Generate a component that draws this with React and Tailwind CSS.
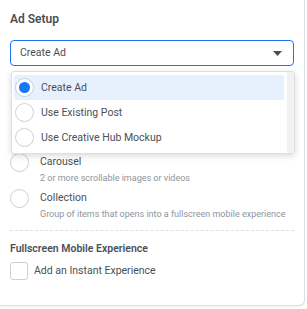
import React from "react";

function Radio({ checked }) {
  return (
    <span className="flex h-[19px] w-[19px] shrink-0 items-center justify-center rounded-full border border-[#ccd0d5] bg-white">
      {checked && <span className="h-[11px] w-[11px] rounded-full bg-[#1877f2]" />}
    </span>
  );
}

function Option({ title, sub }) {
  return (
    <div className="flex gap-[11px]">
      <span className="-mt-[1px]">
        <Radio />
      </span>
      <div className="flex flex-col">
        <span className="text-[10.5px] leading-[16px]">{title}</span>
        <span className="whitespace-nowrap text-[9px] leading-[16px] text-[#90949c]">{sub}</span>
      </div>
    </div>
  );
}

export default function App() {
  return (
    <div className="h-[309px] w-[307px] overflow-hidden bg-white font-['Roboto',sans-serif] text-[#4b4f56]">
      <div className="relative h-[306px] w-[305px] rounded-br-[6px] border-b border-r border-[#dddfe2] bg-white px-[10px] pt-[10px] shadow-[0_1px_2px_rgba(0,0,0,0.06)]">
        <div className="text-[12px] font-semibold leading-[18px]">Ad Setup</div>
        <div className="mt-[12px] flex h-[26px] w-[284px] items-center justify-between rounded-[4px] border border-[#1877f2] pl-[9px] pr-[11px] text-[10.5px]">
          <span>Create Ad</span>
          <svg width="9" height="5" viewBox="0 0 9 5"><path d="M0 0h9L4.5 5z" fill="#4b4f56" /></svg>
        </div>

        <div className="mt-[88px] flex flex-col gap-[4px]">
          <Option title="Carousel" sub="2 or more scrollable images or videos" />
          <Option title="Collection" sub="Group of items that opens into a fullscreen mobile experience" />
        </div>

        <div className="mt-[8px] border-t border-dashed border-[#dddfe2]" />

        <div className="mt-[10px] text-[10.5px] font-semibold leading-[16px]">Fullscreen Mobile Experience</div>
        <label className="mt-[5px] flex items-center gap-[6px]">
          <span className="h-[18px] w-[18px] rounded-[3px] border border-[#ccd0d5] bg-white" />
          <span className="text-[10.5px] leading-[16px]">Add an Instant Experience</span>
        </label>

        <div className="absolute left-[11px] top-[71px] flex w-[284px] rounded-[3px] border border-[#dddfe2] bg-white shadow-[0_2px_6px_rgba(0,0,0,0.15)]">
          <div className="flex flex-1 flex-col py-[3px] pl-[2px] pr-[3px]">
            <div className="flex h-[25px] items-center gap-[7px] rounded-[3px] bg-[#e7f0fd] px-[1px]">
              <Radio checked />
              <span className="text-[10.5px]">Create Ad</span>
            </div>
            <div className="flex h-[25px] items-center gap-[7px] px-[1px]">
              <Radio />
              <span className="text-[10.5px]">Use Existing Post</span>
            </div>
            <div className="flex h-[25px] items-center gap-[7px] px-[1px]">
              <Radio />
              <span className="text-[10.5px]">Use Creative Hub Mockup</span>
            </div>
          </div>
          <div className="w-[7px] bg-[#f1f1f1]" />
        </div>
      </div>
    </div>
  );
}
